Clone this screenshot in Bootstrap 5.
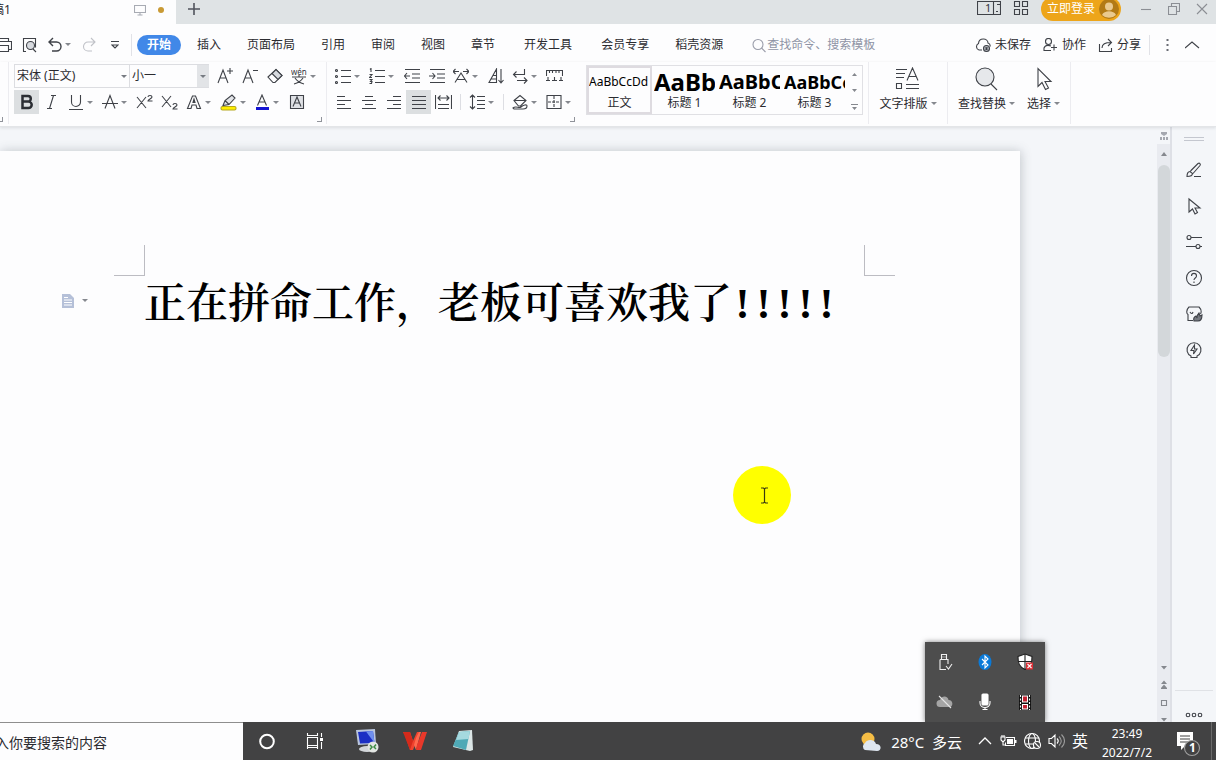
<!DOCTYPE html>
<html lang="zh-CN">
<head>
<meta charset="utf-8">
<meta name="viewport" content="width=device-width, initial-scale=1">
<title>文字文稿1</title>
<link href="https://cdn.jsdelivr.net/npm/bootstrap@5.3.0/dist/css/bootstrap.min.css" rel="stylesheet">
<style>
  body { font-family: "Noto Sans", "Noto Sans CJK SC", sans-serif; font-size: 12px; line-height: 18px; color: #2b2b30; height: 100vh; background: #fdfdfe; }
  button { background: none; border: 0; padding: 0; color: inherit; white-space: nowrap; flex: none; }
  svg { display: block; flex: none; fill: none; stroke: #3f4248; stroke-width: 1.1; }
  svg text { stroke: none; fill: #33363c; font-family: "Noto Sans", "Noto Sans CJK SC", sans-serif; }
  .fixed-w { flex: none; }

  /* window tabs */
  .tabstrip { height: 24px; background: #dfe3e5; }
  .tabstrip button { display: flex; align-items: flex-start; }
  .doc-tab { width: 176px; background: #fdfdfe; overflow: hidden; padding-bottom: 4px; }
  .doc-tab .title { margin-left: -8px; width: 142px; white-space: nowrap; }
  .unsaved { width: 6px; height: 6px; border-radius: 50%; background: #c99a35; }
  .login { height: 24px; width: 80px; margin: -3px 11px 0 12px; background: #eda51a; border-radius: 12px; color: #fff; padding: 0 2px 0 6px; }
  .win-ctl { width: 28px; }
  .vline { width: 1px; background: #e1e2e7; flex: none; }

  /* menu */
  .menubar { height: 38px; }
  .quick button { margin-right: 10px; }
  .menu-tab { padding: 0 13px; color: #2b2b30; text-decoration: none; white-space: nowrap; }
  .menu-tab.active { background: #4188e8; color: #fff; font-weight: 700; border-radius: 10px; padding: 0 10px; line-height: 20px; margin: 0 3px 0 5px; }
  .menu-tab.spaced { margin: 0 3px; }
  .cmd-search { border: 0; background: none; padding: 0; width: 112px; outline: 0; color: #8f94a5; }
  .cmd-search::placeholder { color: #8f94a5; opacity: 1; }

  /* ribbon */
  .ribbon { height: 65px; border-bottom: 1px solid #e3e5e8; box-shadow: 0 1px 3px rgba(60,70,80,.14); z-index: 2; background: #fdfdfe; position: relative; }
  .ribbon > .vline { height: 62px; background: #ececf0; }
  .tool { width: 25px; height: 24px; display: flex; align-items: center; justify-content: center; }
  .tool.drop { width: 34px; justify-content: flex-start; padding-left: 4px; }
  .tool.drop::after, .caret::after { content: ""; border: 3px solid transparent; border-top-color: #85888e; border-bottom: 0; margin-left: 3px; }
  .caret::after { display: inline-block; vertical-align: 3px; }
  .tool.on { background: #dcdfe1; }
  .tool-row { height: 26px; align-items: center; }
  .tool-row.first { padding-top: 2px; margin-bottom: 1px; }
  .sep { width: 1px; height: 16px; background: #dddee3; margin: 0 4px; }
  .combo { height: 24px; border: 1px solid #dcdde1; border-radius: 0; background: #fdfdfe; appearance: none; padding: 0 2px; font-size: 12px; color: #2b2b30; }
  .combo-wrap { position: relative; }
  .combo-wrap::after { content: ""; position: absolute; right: 3px; top: 11px; border: 3px solid transparent; border-top-color: #777b82; border-bottom: 0; }
  .combo-wrap.shade::before { content: ""; position: absolute; right: 0; top: 1px; bottom: 1px; width: 12px; background: #e2e4e7; }
  .corner { width: 5px; height: 5px; border-right: 1px solid #90939a; border-bottom: 1px solid #90939a; }
  .gallery { border: 1px solid #e0e0e4; height: 50px; margin: 3px 5px 0 3px; }
  .style-item { width: 65px; height: 48px; overflow: hidden; display: flex; flex-direction: column; align-items: center; padding: 0 2px; }
  .style-item.on { box-shadow: inset 0 0 0 2px #dedbe0; }
  .sample { height: 28px; line-height: 32px; width: 61px; overflow: hidden; text-align: left; color: #000; }
  .s1 { font-size: 24px; font-weight: 700; } .s2 { font-size: 20px; font-weight: 700; } .s3 { font-size: 18px; font-weight: 700; }
  .big-tool { display: flex; flex-direction: column; align-items: center; padding-top: 5px; height: 60px; gap: 4px; }

  /* workspace */
  .workspace { background: #f4f6f9; padding: 24px 137px 0 0; overflow: hidden; }
  .sheet { background: #fdfdfe; box-shadow: 1px 0 10px rgba(70,80,90,.28); padding-top: 94px; height: 100%; }
  .marks { padding: 0 125px 0 114px; }
  .mark-l, .mark-r { width: 31px; height: 31px; border-bottom: 1px solid #bcbcc2; }
  .mark-l { border-right: 1px solid #bcbcc2; } .mark-r { border-left: 1px solid #bcbcc2; }
  .line-row { padding-left: 61px; }
  .para-btn { width: 83px; height: 50px; text-align: left; }
  .doc-text { font-family: "Noto Serif CJK SC", "Noto Sans CJK SC", serif; font-weight: 600; font-size: 42px; line-height: 48px; color: #000; white-space: nowrap; margin: 0; }
  .bangs { font-family: "Liberation Serif", serif; font-weight: 700; }
  .bangs span { display: inline-block; width: 21px; text-align: center; }
  .spot { position: absolute; left: 733px; top: 339px; width: 58px; height: 58px; border-radius: 50%; background: #ff0; }

  .scroller { width: 15px; background: #e9ebf0; border-right: 2px solid #dee0e6; }
  .scroller .above { height: 17px; width: 13px; background: #f4f6f9; }
  .thumb { width: 12px; height: 192px; border-radius: 6px; background: #d3d7da; }
  .side { width: 44px; background: #f4f6f9; }
  .side button { height: 36px; }
  .side .more { border-top: 1px solid #e0e2e6; height: 32px; width: 38px; padding-top: 16px; }

  .tray { position: absolute; right: 171px; bottom: 0; width: 120px; height: 80px; background: #4d4d4d; box-shadow: 0 0 5px rgba(0,0,0,.5); z-index: 3; grid-template-columns: repeat(3, 1fr); }

  /* taskbar */
  .taskbar { height: 38px; background: #424243; color: #fff; position: relative; z-index: 4; }
  .taskbar button { height: 38px; }
  .os-search { width: 243px; border: 0; border-top: 1px solid #8e8e8e; background: #fdfdfe; font-size: 14px; padding: 2px 0 0; text-indent: -5px; border-radius: 0; }
  .os-search::placeholder { color: #2b2b30; opacity: 1; }
  .launch { width: 48px; }
  .status { width: 24px; }
  .fs-mid { font-size: 16px; } .fs-weather { font-size: 15px; padding-top: 2px; }
  .clock { width: 70px; line-height: 19px; font-size: 12px; padding-top: 2px; }
  .notify { margin-left: 15px; }
</style>
</head>
<body class="d-flex flex-column overflow-hidden m-0">

<header class="tabstrip d-flex fixed-w">
  <div class="doc-tab d-flex align-items-center fixed-w">
    <span class="title">稿1</span>
    <svg width="12" height="12" viewBox="0 0 12 12" style="stroke:#a8abb3"><path d="M.5 1.500h11v7H.5zM6 8.500v2M3.500 11h5"/></svg>
    <span class="unsaved ms-auto me-auto"></span>
  </div>
  <button class="px-2 ms-1" aria-label="新建"><svg width="12" height="20" viewBox="0 0 12 20" style="stroke:#50535c;stroke-width:1.6"><path d="M6 3v12M0 9h12"/></svg></button>
  <div class="ms-auto d-flex">
    <button aria-label="布局" class="me-2 pe-1"><svg width="24" height="20" viewBox="0 0 24 20"><path d="M.5 1.500h23v13H.5zM16.500 1.500v13M19 11.500h2M20 4.500h3"/><text x="8" y="12" font-size="11">1</text></svg></button>
    <button aria-label="应用"><svg width="16" height="20" viewBox="0 0 16 20"><path d="M1.500 1.500h5v5h-5zM9.500 1.500h5v5h-5zM1.500 9.500h5v5h-5zM9.500 9.500h5v5h-5z"/></svg></button>
    <button class="login align-items-center justify-content-between">立即登录
      <svg width="20" height="20" viewBox="0 0 20 20" style="stroke:none"><circle cx="10" cy="10" r="10" fill="#b37a14"/><circle cx="10" cy="7.500" r="4" fill="#eac98d"/><path d="M3 16c2-5 12-5 14 0a10 10 0 0 1-14 0z" fill="#eac98d"/></svg>
    </button>
    <button class="win-ctl ps-2" aria-label="最小化"><svg width="12" height="18" viewBox="0 0 12 18" style="stroke:#8b8e94"><path d="M1 9.500h10"/></svg></button>
    <button class="win-ctl ps-2" aria-label="还原"><svg width="12" height="18" viewBox="0 0 12 18" style="stroke:#8b8e94"><path d="M.5 6.500h8v8h-8zM3.500 6V3.500h8v8H9"/></svg></button>
    <button class="win-ctl ps-2" aria-label="关闭"><svg width="12" height="18" viewBox="0 0 12 18" style="stroke:#8b8e94"><path d="M1 4l10 10M11 4L1 14"/></svg></button>
  </div>
</header>

<nav class="menubar d-flex align-items-center fixed-w pt-1">
  <div class="quick d-flex align-items-center">
    <button aria-label="打印"><svg width="12" height="16" viewBox="0 0 12 16"><path d="M-2 4.500V1.500H8.500v3M-2 12.500H-1M9 12.500h2.500v-8H-2M-2 8.500H8.500v6H-2"/></svg></button>
    <button aria-label="打印预览"><svg width="16" height="16" viewBox="0 0 16 16"><path d="M4 14.500H1.500V1.500h12v9M14 15l-3-3"/><circle cx="8.500" cy="8.500" r="4" fill="#d7dadf"/></svg></button>
    <button aria-label="撤消" class="me-0"><svg width="14" height="16" viewBox="0 0 14 16" style="stroke-width:1.4"><path d="M5 1L1 5l4 4M1 5h7.500a4.500 4.500 0 0 1 0 9H4"/></svg></button>
    <button class="caret" aria-label="撤消列表"></button>
    <button aria-label="恢复"><svg width="16" height="16" viewBox="0 0 16 16" style="stroke:#c0c2c8"><path d="M10 1l4 4-4 4M14 5H7a4.500 4.500 0 0 0 0 9h4"/></svg></button>
    <button aria-label="自定义" class="ms-1 me-2"><svg width="8" height="10" viewBox="0 0 8 10"><path d="M0 1.500h8M1 5l3 3 3-3z"/></svg></button>
    <span class="vline ms-1" style="height:22px"></span>
  </div>
  <a class="menu-tab active" href="#">开始</a>
  <a class="menu-tab" href="#">插入</a>
  <a class="menu-tab" href="#">页面布局</a>
  <a class="menu-tab" href="#">引用</a>
  <a class="menu-tab" href="#">审阅</a>
  <a class="menu-tab" href="#">视图</a>
  <a class="menu-tab" href="#">章节</a>
  <a class="menu-tab spaced" href="#">开发工具</a>
  <a class="menu-tab" href="#">会员专享</a>
  <a class="menu-tab" href="#">稻壳资源</a>
  <label class="d-flex align-items-center ms-3"><svg width="15" height="15" viewBox="0 0 15 15" style="stroke:#9a9daa"><circle cx="6" cy="6.500" r="5"/><path d="M9.500 10l4 4"/></svg>
    <input class="cmd-search" type="text" placeholder="查找命令、搜索模板" aria-label="查找命令"></label>
  <div class="ms-auto d-flex align-items-center">
    <button class="d-flex align-items-center gap-1"><svg width="16" height="16" viewBox="0 0 16 16"><path d="M7 13H4a3.500 3.500 0 0 1-.500-6.500C4 0 13 1 13 6c1.500.500 2.500 1.500 2 3.500"/><circle cx="11.500" cy="11.500" r="3" fill="#b4b7bd"/><path d="M10.500 10.500l2 2m0-2l-2 2"/></svg>未保存</button>
    <button class="d-flex align-items-center gap-1 ms-2 ps-1"><svg width="15" height="14" viewBox="0 0 15 14"><circle cx="5.500" cy="3.500" r="3"/><path d="M8 12.500H1V10c1-2.500 4-3 7-2M8 9.500h6M11 6.500v6"/></svg>协作</button>
    <button class="d-flex align-items-center gap-1 ms-2"><svg class="ms-1" width="15" height="15" viewBox="0 0 15 15"><path d="M1.500 6v7.500h12V10M4 10c0-4 3-5.500 9-5.500M10 1l3.500 3.500L10 8"/></svg>分享</button>
    <span class="vline ms-2 me-3" style="height:20px"></span>
    <button aria-label="更多"><svg width="3" height="14" viewBox="0 0 3 14" style="stroke:none;fill:#6a6d74"><path d="M.5 1h2v2h-2zM.5 6h2v2h-2zM.5 11h2v2h-2z"/></svg></button>
    <button class="ps-3 pe-3" aria-label="折叠功能区"><svg width="15" height="8" viewBox="0 0 15 8"><path d="M0 7l7-6 7 6"/></svg></button>
  </div>
</nav>

<section class="ribbon d-flex fixed-w">
  <div class="corner align-self-end mb-1" style="margin-left:-2px;margin-right:5px"></div>
  <span class="vline"></span>
  <div class="ps-1" style="width:317px">
    <div class="tool-row first d-flex" style="padding-left:1px">
      <label class="combo-wrap"><select class="combo" style="width:116px" aria-label="字体"><option>宋体 (正文)</option></select></label>
      <label class="combo-wrap shade" style="margin:0 3px 0 -1px"><select class="combo" style="width:80px" aria-label="字号"><option>小一</option></select></label>
      <button class="tool" aria-label="增大字号"><svg width="16" height="16" viewBox="0 0 16 16"><path d="M1 15L6 2l5 13M3 10h6M13 0v6M10 3h6"/></svg></button>
      <button class="tool" aria-label="减小字号"><svg width="16" height="16" viewBox="0 0 16 16"><path d="M1 15L6 2l5 13M3 10h6M11 2.500h5"/></svg></button>
      <button class="tool" aria-label="清除格式"><svg width="16" height="16" viewBox="0 0 16 16"><path d="M1 9l8-7.500 6 6L8 14.500H6z"/><path d="M5 5.500l6 6 4-4-6-6z" fill="#d6d9de"/></svg></button>
      <button class="tool drop" aria-label="拼音指南"><svg width="16" height="18" viewBox="0 0 16 18"><text x="0" y="8" font-size="8">wén</text><path d="M1 10h14M8 8v2M4 11c2 3 5 5 9 6M12 11c-2 3-5 5-9 6"/></svg></button>
    </div>
    <div class="tool-row d-flex" style="padding-left:1px">
      <button class="tool on" aria-label="加粗"><svg width="16" height="16" viewBox="0 0 16 16" style="stroke-width:2.500;stroke:#2b2e34"><path d="M3.500 2v12H9.500a3.200 3.200 0 0 0 0-6.400H3.500 9a2.800 2.800 0 0 0 0-5.600z"/></svg></button>
      <button class="tool" aria-label="倾斜"><svg width="16" height="16" viewBox="0 0 16 16"><path d="M7 1.500h5M3 14.500h5M9.500 1.500l-4 13"/></svg></button>
      <button class="tool drop" aria-label="下划线"><svg width="16" height="16" viewBox="0 0 16 16"><path d="M3.500 1v7a4.500 4.500 0 0 0 9 0V1M1 15.500h14"/></svg></button>
      <button class="tool drop" aria-label="删除线"><svg width="16" height="16" viewBox="0 0 16 16"><path d="M3 14.500L8 1.500l5 13M0 9.500h16"/></svg></button>
      <button class="tool" aria-label="上标"><svg width="17" height="16" viewBox="0 0 17 16"><path d="M1 3l9 11M10 3L1 14M12 3c0-2 4-2 4 0 0 1.500-4 2.500-4 4h4.500"/></svg></button>
      <button class="tool" aria-label="下标"><svg width="17" height="16" viewBox="0 0 17 16"><path d="M1 2l9 11M10 2L1 13M12 11c0-2 4-2 4 0 0 1.500-4 2.500-4 4h4.500"/></svg></button>
      <button class="tool drop" aria-label="文字效果"><svg width="16" height="16" viewBox="0 0 16 16"><path d="M1.500 14.500L6.500 2h3l5 12.500H11L10 11H6l-1 3.500zM7 8.500l1-3.500 1 3.500z"/></svg></button>
      <button class="tool drop" aria-label="突出显示"><svg width="17" height="17" viewBox="0 0 17 17"><rect x="1" y="12.500" width="15" height="3.500" rx="1.500" fill="#ffee00" stroke="#b5a820"/><path d="M3 11.500l2-5L12 1l3 3-6 6.500zM5 6.500l4 4" fill="#e2e4e8"/></svg></button>
      <button class="tool drop" aria-label="字体颜色"><svg width="16" height="17" viewBox="0 0 16 17"><path d="M3.500 11.500L8 1l4.500 10.500M5 8h6"/><path d="M2 14.500h13" style="stroke:#1414d2;stroke-width:3"/></svg></button>
      <button class="tool" aria-label="字符底纹"><svg width="16" height="16" viewBox="0 0 16 16"><path d="M1.500 1.500h13v13h-13z" fill="#dfe1e5"/><path d="M4 12.500L8 3l4 9.500M5.500 9h5"/></svg></button>
    </div>
    <div class="corner ms-auto me-1" style="margin-top:2px"></div>
  </div>
  <span class="vline"></span>
  <div class="ps-1" style="width:256px">
    <div class="tool-row first d-flex">
      <button class="tool drop" aria-label="项目符号"><svg width="16" height="16" viewBox="0 0 16 16"><path d="M6 2.500h10M6 8.500h10M6 14.500h10"/><circle cx="1.500" cy="2.500" r="1"/><circle cx="1.500" cy="8.500" r="1"/><circle cx="1.500" cy="14.500" r="1"/></svg></button>
      <button class="tool drop" aria-label="编号"><svg width="16" height="16" viewBox="0 0 16 16"><path d="M6 2.500h10M6 8.500h10M6 14.500h10M1 1.500l1-1V4M.5 6.500h2.500L.5 9.500H3M.5 11.500H3l-1.500 2H3l-.5 2H.5"/></svg></button>
      <button class="tool" aria-label="减少缩进"><svg width="16" height="16" viewBox="0 0 16 16"><path d="M1 1.500h15M8 6h8M8 10h8M1 14.500h15M0 8h6M3 5L.5 8 3 11"/></svg></button>
      <button class="tool" aria-label="增加缩进"><svg width="16" height="16" viewBox="0 0 16 16"><path d="M1 1.500h15M8 6h8M8 10h8M1 14.500h15M0 8h6M3.500 5L6 8l-2.500 3"/></svg></button>
      <button class="tool drop" aria-label="中文版式"><svg width="16" height="16" viewBox="0 0 16 16"><path d="M2 14.500L8 5l6 9.500M4.500 11.500h7M0 3.500h6M2.500 1L0 3.500 2.500 6M10 3.500h6M13.500 1L16 3.500 13.500 6"/></svg></button>
      <button class="tool" aria-label="排序"><svg width="16" height="16" viewBox="0 0 16 16"><path d="M1 14.500L8.500 1v13.500zM5 7.500h4M3 11h6M13 1v13M10.500 12l2.500 3 2.500-3"/></svg></button>
      <button class="tool drop" aria-label="显示段落标记"><svg width="16" height="16" viewBox="0 0 16 16"><path d="M12.500 1v5.500H2M4.500 3.500L1.500 6.500l3 3M5 12.500h10M12 9.500l3 3-3 3"/></svg></button>
      <button class="tool" aria-label="制表位"><svg width="17" height="16" viewBox="0 0 17 16"><path d="M.5 8V2.500h16V8M3.500 2.500V5M6.500 2.500V5M10 2.500V5M13 2.500V5M0 12.500h4M2 12.500V9M6 12.500h5M8.500 12.500V9M13 12.500h4M15 12.500V9"/></svg></button>
    </div>
    <div class="tool-row d-flex">
      <button class="tool" aria-label="左对齐"><svg width="16" height="16" viewBox="0 0 16 16"><path d="M1 2.500h8M1 6.500h14M1 10.500h8M1 14.500h14"/></svg></button>
      <button class="tool" aria-label="居中"><svg width="16" height="16" viewBox="0 0 16 16"><path d="M4 2.500h8M1 6.500h14M4 10.500h8M1 14.500h14"/></svg></button>
      <button class="tool" aria-label="右对齐"><svg width="16" height="16" viewBox="0 0 16 16"><path d="M7 2.500h8M1 6.500h14M7 10.500h8M1 14.500h14"/></svg></button>
      <button class="tool on" aria-label="两端对齐"><svg width="16" height="16" viewBox="0 0 16 16"><path d="M1 2.500h14M1 6.500h14M1 10.500h14M1 14.500h14"/></svg></button>
      <button class="tool" aria-label="分散对齐"><svg width="17" height="16" viewBox="0 0 17 16"><path d="M.5 1v14M16.500 1v14M3 10.500h11M3 14.500h11M3 4h11M5.500 1.500L3 4l2.500 2.500M11.500 1.500L14 4l-2.500 2.500"/></svg></button>
      <span class="sep"></span>
      <button class="tool drop" aria-label="行距"><svg width="16" height="16" viewBox="0 0 16 16"><path d="M3.500 1v14M1 3.500L3.500 1 6 3.500M1 12.500L3.500 15 6 12.500M8 2.500h8M8 6.500h8M8 10.500h8M8 14.500h8"/></svg></button>
      <span class="sep"></span>
      <button class="tool drop" aria-label="底纹颜色"><svg width="16" height="16" viewBox="0 0 16 16"><path d="M2 6.500l6-5 6 5-5.500 5.500h-2zM2 6.500h12M1 14c3-3 6 1 8-1s6-3 6-1-2 3-4 3H2z"/></svg></button>
      <button class="tool drop" aria-label="边框"><svg width="16" height="16" viewBox="0 0 16 16"><path d="M1 1.500h14v13H1z"/><path d="M8 2v12M2 8h12" stroke-dasharray="3 1"/></svg></button>
    </div>
    <div class="corner ms-auto me-2" style="margin-top:2px"></div>
  </div>
  <div class="gallery d-flex">
    <button class="style-item on"><span class="sample">AaBbCcDd</span>正文</button>
    <button class="style-item"><span class="sample s1">AaBb</span>标题 1</button>
    <button class="style-item"><span class="sample s2">AaBbC</span>标题 2</button>
    <button class="style-item"><span class="sample s3">AaBbCc</span>标题 3</button>
    <button aria-label="样式列表"><svg width="15" height="46" viewBox="0 0 15 46" style="stroke:none;fill:#85888e"><path d="M5 9h5L7.500 6zM5 22h5l-2.500 3zM4 37h7v1H4zM5 40h5l-2.500 3z"/></svg></button>
  </div>
  <span class="vline"></span>
  <div class="d-flex justify-content-center" style="width:78px"><button class="big-tool"><svg width="25" height="24" viewBox="0 0 25 24"><path d="M1 2.500h11M1 6.500h9M1 10.500h8M1.500 16.500h5v5h-5zM11 17.500h13M11 21.500h13M12 13.500L17.500 1l5.500 12.500M14 9.500h7"/></svg><span class="caret">文字排版</span></button></div>
  <span class="vline"></span>
  <div class="d-flex" style="width:122px;padding-left:10px">
    <button class="big-tool"><svg width="25" height="24" viewBox="0 0 25 24"><circle cx="11" cy="10" r="9" fill="#e6e8eb"/><path d="M17 17l6 6"/></svg><span class="caret">查找替换</span></button>
    <button class="big-tool ms-2 ps-1"><svg width="25" height="24" viewBox="0 0 25 24"><path d="M7 1.500v18l4-4 3.500 7 3-1.500-3.500-6.500h6z"/></svg><span class="caret">选择</span></button>
  </div>
  <span class="vline"></span>
</section>

<main class="d-flex flex-grow-1 position-relative" style="min-height:0">
  <section class="workspace flex-grow-1">
    <article class="sheet">
      <div class="marks d-flex justify-content-between"><span class="mark-l"></span><span class="mark-r"></span></div>
      <div class="line-row d-flex align-items-start">
        <button class="para-btn d-flex align-items-center" aria-label="段落布局"><svg width="14" height="16" viewBox="0 0 14 16" style="stroke:none"><path d="M1 1h8l4 4v10H1z" fill="#b5c0d8"/><path d="M3 4h4v1H3zM3 6.500h8v1H3zM3 9h8v1H3zM3 11.500h8v1H3z" fill="#fff"/></svg><span class="caret ms-1"></span></button>
        <h1 class="doc-text">正在拼命工作，老板可喜欢我了<span class="bangs"><span>!</span><span>!</span><span>!</span><span>!</span><span>!</span></span></h1>
      </div>
    </article>
  </section>
  <div class="spot d-flex align-items-center justify-content-center"><svg class="ms-1" width="9" height="17" viewBox="0 0 9 17" style="stroke:#3a3a10;stroke-width:1.200"><path d="M1 1h2.500l1 1 1-1H8M4.500 2v13M1 16h2.500l1-1 1 1H8"/></svg></div>

  <div class="scroller d-flex flex-column align-items-center fixed-w">
    <span class="above"><svg width="13" height="17" viewBox="0 0 13 17" style="stroke:none;fill:#a5a8b0"><path d="M4 5h6v2L7 9 4 7zM3 10h2v3H3zM6 10h2v3H6zM9 10h2v3H9z"/></svg></span>
    <svg width="13" height="21" viewBox="0 0 13 21" style="stroke:none;fill:#85888e"><path d="M4 12h6L7 8z"/></svg>
    <span class="thumb"></span>
    <svg class="mt-auto" width="13" height="62" viewBox="0 0 13 62" style="stroke:none;fill:#85888e"><path d="M4 6h6l-3 3.500zM4 24h6l-3-3.500zM4 28h6l-3-3.500zM4 28h6v1H4zM4 58h6l-3 3.500z"/><path d="M4.500 40.500h5v5h-5z" style="fill:none;stroke:#85888e"/></svg>
  </div>

  <aside class="side d-flex flex-column align-items-center fixed-w">
    <svg width="20" height="25" viewBox="0 0 20 25" style="stroke:#c4c7cf"><path d="M0 10.500h20M0 13.500h20"/></svg>
    <button aria-label="画笔"><svg width="18" height="18" viewBox="0 0 18 18"><path d="M2 15.500c0-3 1-5 3-5l2.500 2c0 2-2 3-5.500 3zM5.500 10L13 2.500c1.500-1 3 .5 2 2L8 12.500M9 15.500h7"/></svg></button>
    <button aria-label="选择"><svg width="18" height="18" viewBox="0 0 18 18"><path d="M4 2v13l3.500-3 2.500 5 2.500-1.500-2.500-4.500h5z"/></svg></button>
    <button aria-label="设置"><svg width="18" height="18" viewBox="0 0 18 18"><circle cx="4" cy="4.500" r="2"/><circle cx="13" cy="13.500" r="2"/><path d="M6 4.500h11M1 13.500h10M15 13.500h2"/></svg></button>
    <button aria-label="帮助"><svg width="18" height="18" viewBox="0 0 18 18"><circle cx="9" cy="9" r="7.500"/><path d="M6.500 7c0-3.500 5-3.500 5 0 0 2-2.500 2-2.500 4M9 12.500v1.500"/></svg></button>
    <button aria-label="稻壳"><svg width="18" height="18" viewBox="0 0 18 18"><path d="M8 15.500H3v-6c-2-1-1.500-5 1-7.500h10c2 2 3 4 1.500 7M5 7c1 2 2.500 2 3 0"/><path d="M9 16c-1-3 0-4 2-5l1 2c0-3 1-4 2-5l1 3 2-1c0 4-1 6-4 6z" fill="#777b82"/></svg></button>
    <button aria-label="能力"><svg width="18" height="18" viewBox="0 0 18 18"><path d="M6 16.500v-1.500a7 7 0 1 1 6 0v1.500zM9.500 4L6 9.500h3L8.500 13 12 8H9.500z"/></svg></button>
    <button class="more mt-auto d-flex justify-content-center" aria-label="更多"><svg class="mt-1" width="18" height="8" viewBox="0 0 18 8"><circle cx="3" cy="4" r="1.800"/><circle cx="9" cy="4" r="1.800"/><circle cx="15" cy="4" r="1.800"/></svg></button>
  </aside>

  <div class="tray d-grid">
    <button class="d-grid justify-content-center align-content-center" aria-label="USB"><svg width="18" height="18" viewBox="0 0 18 18" style="stroke:#f0f0f0"><path d="M5.500 1.500h5v5h-5zM4 6.500h8V11M10 16.500H4v-10M7 3.500v1M9 3.500v1M10 13l2.500 3L16 11"/></svg></button>
    <button class="d-grid justify-content-center align-content-center" aria-label="蓝牙"><svg width="18" height="18" viewBox="0 0 18 18" style="stroke:#fff"><ellipse cx="9" cy="9" rx="6.500" ry="8" fill="#0a7ad8" stroke="none"/><path d="M6 6l6 6-3 3V3l3 3-6 6"/></svg></button>
    <button class="d-grid justify-content-center align-content-center" aria-label="安全"><svg width="18" height="18" viewBox="0 0 18 18" style="stroke:#222"><path d="M9 1l7 2.500c0 7-1 10-7 13-6-3-7-6-7-13z" fill="#fff"/><path d="M9 1v16M2 8.500h14"/><path d="M10 9.500h7v7h-7z" fill="#dc2f36" stroke="none"/><path d="M11.500 11l4 4M15.500 11l-4 4" stroke="#fff"/></svg></button>
    <button class="d-grid justify-content-center align-content-center" aria-label="云盘"><svg width="18" height="18" viewBox="0 0 18 18" style="stroke:#e4e4e4"><path d="M4 14a3.500 3.500 0 0 1 0-7c2-5 8-4 8.500 0 5 0 5 7 1 7z" fill="#a5a5a5" stroke="none"/><path d="M3 3l12 12"/></svg></button>
    <button class="d-grid justify-content-center align-content-center" aria-label="麦克风"><svg width="18" height="18" viewBox="0 0 18 18" style="stroke:#fff"><rect x="6" y="1" width="6" height="11" rx="1" fill="#fff"/><path d="M4 8v2c0 6 10 6 10 0V8M9 14v2.500M6.500 16.500h5"/></svg></button>
    <button class="d-grid justify-content-center align-content-center" aria-label="录像"><svg width="18" height="18" viewBox="0 0 18 18" style="stroke:none"><path d="M3 2h12v15H3z" fill="#111"/><path d="M4.500 2v15M13.500 2v15" stroke="#fff" stroke-dasharray="2 1.500"/><path d="M6.500 3h5v6h-5zM6.500 11.500h5V16h-5z" fill="#c22030" stroke="#fff"/></svg></button>
  </div>
</main>

<footer class="taskbar d-flex align-items-stretch fixed-w">
  <input class="os-search" type="text" placeholder="入你要搜索的内容" aria-label="搜索">
  <button class="launch d-flex align-items-center justify-content-center" aria-label="Cortana"><svg width="18" height="18" viewBox="0 0 18 18" style="stroke:#fff;stroke-width:2"><circle cx="9" cy="9.500" r="6.800"/></svg></button>
  <button class="launch d-flex align-items-center justify-content-center" aria-label="任务视图"><svg width="18" height="18" viewBox="0 0 18 18" style="stroke:#fff"><path d="M1.500 1v3M11.500 1v3M1.500 5.500h10v8h-10zM1.500 17v-3M11.500 17v-3M1.500 3.500h10M1.500 15.500h10M15.500 1v4M15.500 10v7"/><path d="M14 6h3v3h-3z" fill="#fff" stroke="none"/></svg></button>
  <button class="launch d-flex align-items-center justify-content-center ms-1" aria-label="远程"><svg width="24" height="26" viewBox="0 0 24 26" style="stroke:none"><path d="M1 2l19-1 1 15-18 1z" fill="#b9c5dd"/><path d="M3 4l15-1 1.500 12L5 15.500z" fill="#1c2fc4"/><path d="M11 3.400L18 3l1.500 12z" fill="#6f8fee"/><ellipse cx="12" cy="21" rx="8" ry="3" fill="#d3d6da"/><circle cx="18" cy="19" r="5.500" fill="#e2e5e2"/><path d="M15 17l2 2-2 2.500M21 16.500L19 19l2 2" fill="none" stroke="#3e8d45" stroke-width="1.500"/></svg></button>
  <button class="launch d-flex align-items-center justify-content-center" aria-label="WPS"><svg width="24" height="20" viewBox="0 0 24 20" style="stroke:none"><path d="M0 1h7l3 9 4-9h3l-7 18H7L2 4z" fill="#f0432e"/><path d="M0 1h7l3 9-3 9z" fill="#d52a1b"/><path d="M13 7l3-6 2 0-5 18-2-5z" fill="#ff6a4e"/><path d="M14 14l5-13h5l-6 18h-5z" fill="#e8382a"/></svg></button>
  <button class="launch d-flex align-items-center justify-content-center" aria-label="记事本"><svg width="24" height="24" viewBox="0 0 24 24" style="stroke:none"><path d="M8 2l13-1 1 20-3 1L2 18z" fill="#dce6e6"/><path d="M8 3l11-1-4 19L2 17z" fill="#4fa9b6"/><path d="M8 3l11-1-1.500 8L5 11z" fill="#a5d9df"/></svg></button>

  <div class="ms-auto d-flex align-items-center">
    <button class="d-flex align-items-center fs-weather"><svg class="me-2" width="24" height="22" viewBox="0 0 24 22" style="stroke:none"><circle cx="9" cy="8" r="6.500" fill="#f5bd45"/><path d="M6 19a4 4 0 0 1 0-7c3-5 10-3 11 1 6 0 6 7 1 7z" fill="#dfe7f1"/></svg>28°C&nbsp; 多云</button>
    <button class="ms-3 me-1" aria-label="隐藏的图标"><svg width="14" height="8" viewBox="0 0 14 8" style="stroke:#fff;stroke-width:1.300"><path d="M1 7l6-6 6 6"/></svg></button>
    <button class="status" aria-label="电池"><svg class="ms-1" width="17" height="16" viewBox="0 0 17 16" style="stroke:#fff"><path d="M1 4h4v3L3 9 1 7zM2 4V2M4 4V2M3 9v3h2M6 4.500h8.500v8h-9v-3"/><path d="M7 6h6v5H7zM15 7h1.500v3H15z" fill="#fff" stroke="none"/></svg></button>
    <button class="status" aria-label="网络"><svg class="ms-1" width="17" height="18" viewBox="0 0 17 18" style="stroke:#fff"><circle cx="8" cy="9" r="7.500"/><ellipse cx="8" cy="9" rx="3.500" ry="7.500"/><path d="M1 6h14M1 12h9"/><circle cx="13" cy="13" r="3.500" fill="#424243"/><path d="M11 11l4 4"/></svg></button>
    <button class="status" aria-label="音量"><svg class="ms-1" width="17" height="16" viewBox="0 0 17 16" style="stroke:#fff"><path d="M1 5.500h2.500L7 2v12l-3.500-3.500H1zM9 5.500c1.500 1.500 1.500 3.500 0 5"/><path d="M11 3.500c3 3 3 6 0 9M13.500 1.500c4 4 4 9 0 13" stroke="#9a9a9a"/></svg></button>
    <button class="status fs-mid">英</button>
    <button class="clock text-center">23:49<br>2022/7/2</button>
    <button class="notify" aria-label="通知"><svg width="30" height="32" viewBox="0 0 30 32" style="stroke:none"><path d="M0 7h16v14H8l-4 4v-4H0z" fill="#fff"/><path d="M3 11h10M3 14h10M3 17h8" stroke="#424243"/><circle cx="15" cy="23" r="7.500" fill="#424243" stroke="#a0a0a0"/><text x="12" y="27" font-size="12" font-weight="700" style="fill:#fff">1</text></svg></button>
    <span class="vline align-self-stretch me-1" style="margin-left:4px;background:#6a6a6a"></span>
  </div>
</footer>

<script src="https://cdn.jsdelivr.net/npm/bootstrap@5.3.0/dist/js/bootstrap.bundle.min.js"></script>
</body>
</html>
